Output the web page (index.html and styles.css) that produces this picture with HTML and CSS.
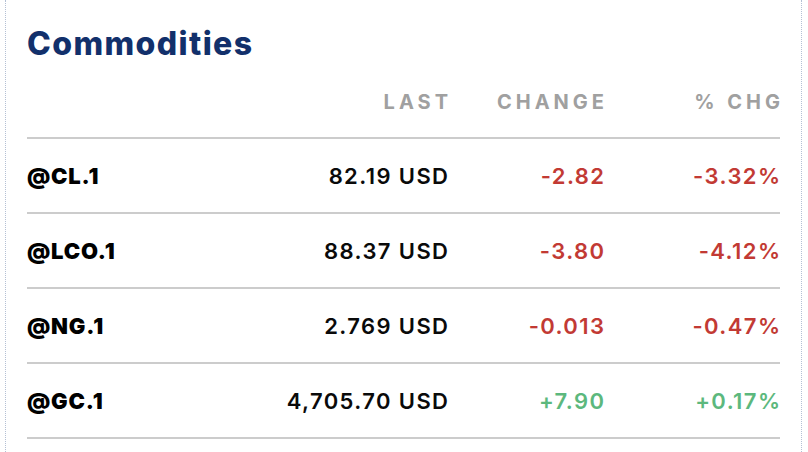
FILE: index.html
```html
<!DOCTYPE html>
<html lang="en">
<head>
<meta charset="utf-8">
<title>Commodities</title>
<link rel="stylesheet" href="styles.css">
</head>
<body>
<section class="panel">
  <h2 class="title">Commodities</h2>
  <table class="quotes">
    <colgroup>
      <col class="c-sym"><col class="c-last"><col class="c-chg"><col class="c-pct">
    </colgroup>
    <thead>
      <tr><th></th><th><span>LAST</span></th><th><span>CHANGE</span></th><th><span>% CHG</span></th></tr>
    </thead>
    <tbody>
      <tr><td class="sym">@CL.1</td><td class="last"><span>82.19 USD</span></td><td class="down"><span>-2.82</span></td><td class="down"><span>-3.32%</span></td></tr>
      <tr><td class="sym">@LCO.1</td><td class="last"><span>88.37 USD</span></td><td class="down"><span>-3.80</span></td><td class="down"><span>-4.12%</span></td></tr>
      <tr><td class="sym">@NG.1</td><td class="last"><span>2.769 USD</span></td><td class="down"><span>-0.013</span></td><td class="down"><span>-0.47%</span></td></tr>
      <tr><td class="sym">@GC.1</td><td class="last"><span>4,705.70 USD</span></td><td class="up"><span>+7.90</span></td><td class="up"><span>+0.17%</span></td></tr>
    </tbody>
  </table>
</section>
</body>
</html>
```
FILE: styles.css
```css
html, body {
  margin: 0;
  padding: 0;
  background: #ffffff;
}
body {
  font-family: Inter, "Noto Sans", "Liberation Sans", sans-serif;
  height: 452px;
  overflow: hidden;
}
.panel {
  margin-left: 5px;
  width: 797px;
  height: 452px;
  border-left: 1px dotted #b4c0d4;
  border-right: 1px dotted #b4c0d4;
  padding: 24px 20px 0 21px;
  box-sizing: border-box;
}
.title {
  margin: 0;
  font-size: 32px;
  font-weight: 800;
  letter-spacing: 1.4px;
  line-height: 40px;
  color: #12306b;
}
.quotes {
  border-collapse: collapse;
  width: 753px;
}
.c-sym { width: 200px; }
.c-last { width: 221px; }
.c-chg { width: 156px; }
.c-pct { width: 176px; }
.quotes th {
  text-align: right;
  font-size: 20px;
  font-weight: 700;
  letter-spacing: 4px;
  line-height: 20px;
  color: #a0a0a0;
  padding: 28px 0 25px 0;
  border-bottom: 2px solid #cccccc;
}
.quotes th span { margin-right: -4px; }
.quotes td {
  height: 73px;
  padding: 0;
  border-bottom: 2px solid #cccccc;
  text-align: right;
  font-size: 22px;
  font-weight: 600;
  letter-spacing: 1.4px;
  color: #0a0a0a;
}
.quotes td span { margin-right: -1.4px; }
.quotes td.sym {
  text-align: left;
  font-weight: 900;
  letter-spacing: 0.8px;
  color: #000000;
}
.quotes td.down { color: #c23a34; }
.quotes td.up { color: #5cb87d; }
```
